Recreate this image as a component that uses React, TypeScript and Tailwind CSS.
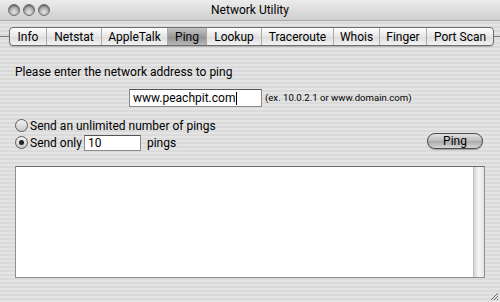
import React from 'react';

const tabs: [string, number][] = [
  ['Info', 36],
  ['Netstat', 55],
  ['AppleTalk', 66],
  ['Ping', 39],
  ['Lookup', 55],
  ['Traceroute', 72],
  ['Whois', 46],
  ['Finger', 47],
  ['Port Scan', 67],
];

const Light = () => (
  <span className="block h-[12px] w-[12px] rounded-full border border-[#6f6f6f] bg-[radial-gradient(circle_at_50%_70%,#e8e8e8_0%,#a9a9a9_55%,#7b7b7b_100%)] shadow-[inset_0_1px_1px_rgba(0,0,0,0.4)]" />
);

const Radio = ({ checked }: { checked?: boolean }) => (
  <span className="flex h-[13px] w-[13px] items-center justify-center rounded-full border border-[#5a5a5a] bg-[linear-gradient(#f4f4f4,#c9c9c9)]">
    {checked && <span className="block h-[5px] w-[5px] rounded-full bg-[#222]" />}
  </span>
);

const App: React.FC = () => {
  const pinstripe =
    'bg-[repeating-linear-gradient(180deg,#e4e4e4_0px,#e4e4e4_2px,#dadada_2px,#dadada_4px)]';

  return (
    <div
      className={`flex h-[302px] w-[500px] flex-col overflow-hidden text-[12px] text-black ${pinstripe}`}
      style={{ fontFamily: 'Roboto, "Liberation Sans", Arial, sans-serif' }}
    >
      {/* title bar */}
      <div className="grid h-[21px] grid-cols-[80px_1fr_80px] items-center border-b border-[#a8a8a8] bg-[linear-gradient(#ececec,#cfcfcf)]">
        <div className="flex items-center gap-[3px] pl-[8px]">
          <Light />
          <Light />
          <Light />
        </div>
        <div className="text-center leading-none">Network Utility</div>
        <div />
      </div>

      {/* tabs */}
      <div className="mt-[6px] flex items-center">
        <div className="h-px w-[9px] bg-[#7a7a7a]" />
        <div className="flex h-[19px] overflow-hidden rounded-[4px] border border-[#6d6d6d] bg-[linear-gradient(#fdfdfd,#e6e6e6_50%,#dcdcdc_51%,#f2f2f2)] shadow-[0_1px_1px_rgba(0,0,0,0.2)]">
          {tabs.map(([t, w], i) => (
            <div
              key={t}
              style={{ width: w }}
              className={`flex items-center justify-center leading-none ${
                i > 0 ? 'border-l border-[#a9a9a9]' : ''
              } ${t === 'Ping' ? 'bg-[linear-gradient(#c4c4c4,#9c9c9c_50%,#8e8e8e_51%,#b9b9b9)]' : ''}`}
            >
              {t}
            </div>
          ))}
        </div>
        <div className="h-px flex-1 bg-[#7a7a7a]" />
      </div>

      <div className="px-[15px]">
        <div className="mt-[20px] leading-none">Please enter the network address to ping</div>

        <div className="mt-[11px] flex items-center pl-[114px]">
          <div className="flex h-[18px] w-[133px] items-center border border-[#8a8a8a] border-t-[#555] bg-white px-[3px] leading-none">
            www.peachpit.com<span className="ml-px inline-block h-[13px] w-px bg-black" />
          </div>
          <span className="ml-[3px] text-[9.6px] leading-none">(ex. 10.0.2.1 or www.domain.com)</span>
        </div>

        <div className="mt-[12px] flex items-center gap-[2px] leading-none">
          <Radio />
          <span>Send an unlimited number of pings</span>
        </div>

        <div className="mt-px flex items-center leading-none">
          <Radio checked />
          <span className="ml-[2px]">Send only</span>
          <div className="ml-[2px] flex h-[16px] w-[57px] items-center border border-[#8a8a8a] border-t-[#555] bg-white px-[3px]">
            10
          </div>
          <span className="ml-[6px]">pings</span>
          <button className="mb-[3px] ml-auto mr-[2px] flex h-[16px] w-[56px] items-center justify-center rounded-full border border-[#4c4c4c] bg-[linear-gradient(#e2e2e2,#bcbcbc_50%,#a8a8a8_51%,#d6d6d6)] leading-none shadow-[0_1px_1px_rgba(0,0,0,0.3)]">
            Ping
          </button>
        </div>

        <div className="mt-[14px] flex h-[112px] border border-[#8e8e8e] border-t-[#6a6a6a] bg-white">
          <div className="flex-1" />
          <div className="w-[11px] border-l border-[#bdbdbd] bg-[linear-gradient(90deg,#d6d6d6,#f6f6f6_50%,#e6e6e6)]" />
        </div>
      </div>

      <div className="mt-auto flex justify-end pb-px pr-px">
        <svg width="10" height="10" viewBox="0 0 10 10">
          <path d="M9 2 L2 9 M9 5 L5 9 M9 8 L8 9" stroke="#6a6a6a" strokeWidth="1" />
        </svg>
      </div>
    </div>
  );
};

export default App;
